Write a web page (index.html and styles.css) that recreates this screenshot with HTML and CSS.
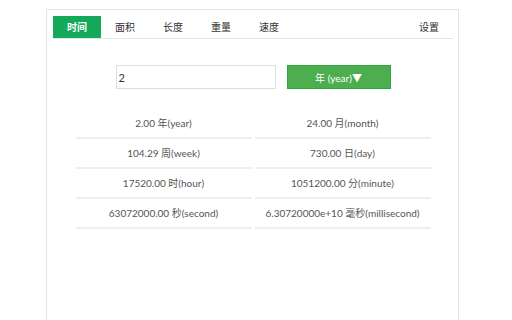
FILE: index.html
```html
<!DOCTYPE html>
<html lang="zh-CN">
<head>
    <meta charset="UTF-8">
    <title>单位换算</title>
    <link rel="stylesheet" href="styles.css">
</head>
<body>
    <div class="panel">
        <div class="tabs">
            <span class="tab active">时间</span>
            <span class="tab">面积</span>
            <span class="tab">长度</span>
            <span class="tab">重量</span>
            <span class="tab">速度</span>
            <span class="tab settings">设置</span>
        </div>

        <div class="form-row">
            <input type="text" class="value-input" value="2">
            <button class="unit-button">年 (year)▼</button>
        </div>

        <div class="results">
            <div class="cell">2.00 年(year)</div>
            <div class="cell">24.00 月(month)</div>
            <div class="cell">104.29 周(week)</div>
            <div class="cell">730.00 日(day)</div>
            <div class="cell">17520.00 时(hour)</div>
            <div class="cell">1051200.00 分(minute)</div>
            <div class="cell">63072000.00 秒(second)</div>
            <div class="cell">6.30720000e+10 毫秒(millisecond)</div>
        </div>
    </div>
</body>
</html>
```

FILE: styles.css
```css
body {
    margin: 0;
    background-color: #fff;
    font-family: Lato, "Noto Sans CJK SC", sans-serif;
    font-size: 10px;
    color: #333;
}
.panel {
    box-sizing: border-box;
    margin: 9px 0 0 46px;
    width: 413px;
    height: 311px;
    padding: 6px 5px 0 6px;
    border: 1px solid #e4e4e4;
    border-bottom: none;
}
.tabs {
    display: flex;
    border-bottom: 1px solid #e6e6e6;
}
.tab {
    width: 48px;
    height: 22px;
    line-height: 22px;
    text-align: center;
    color: #333;
}
.tab.active {
    background-color: #14a85a;
    color: #fff;
    font-weight: bold;
}
.tab.settings {
    margin-left: auto;
}
.form-row {
    display: flex;
    justify-content: center;
    gap: 11px;
    margin-top: 26px;
}
.value-input {
    box-sizing: border-box;
    width: 160px;
    height: 24px;
    padding: 0 2px;
    border: 1px solid #dedede;
    font-family: inherit;
    font-size: 11px;
    color: #333;
    outline: none;
}
.unit-button {
    box-sizing: border-box;
    width: 104px;
    height: 24px;
    background-color: #4cae4f;
    border: 1px solid #2fa53a;
    color: #fff;
    font-family: inherit;
    font-size: 10px;
    padding: 0;
}
.results {
    display: grid;
    grid-template-columns: 176px 176px;
    column-gap: 3px;
    justify-content: center;
    margin-top: 20px;
}
.cell {
    height: 28px;
    line-height: 28px;
    text-align: center;
    color: #555;
    border-bottom: 2px solid #eeeeee;
    white-space: nowrap;
}
```
